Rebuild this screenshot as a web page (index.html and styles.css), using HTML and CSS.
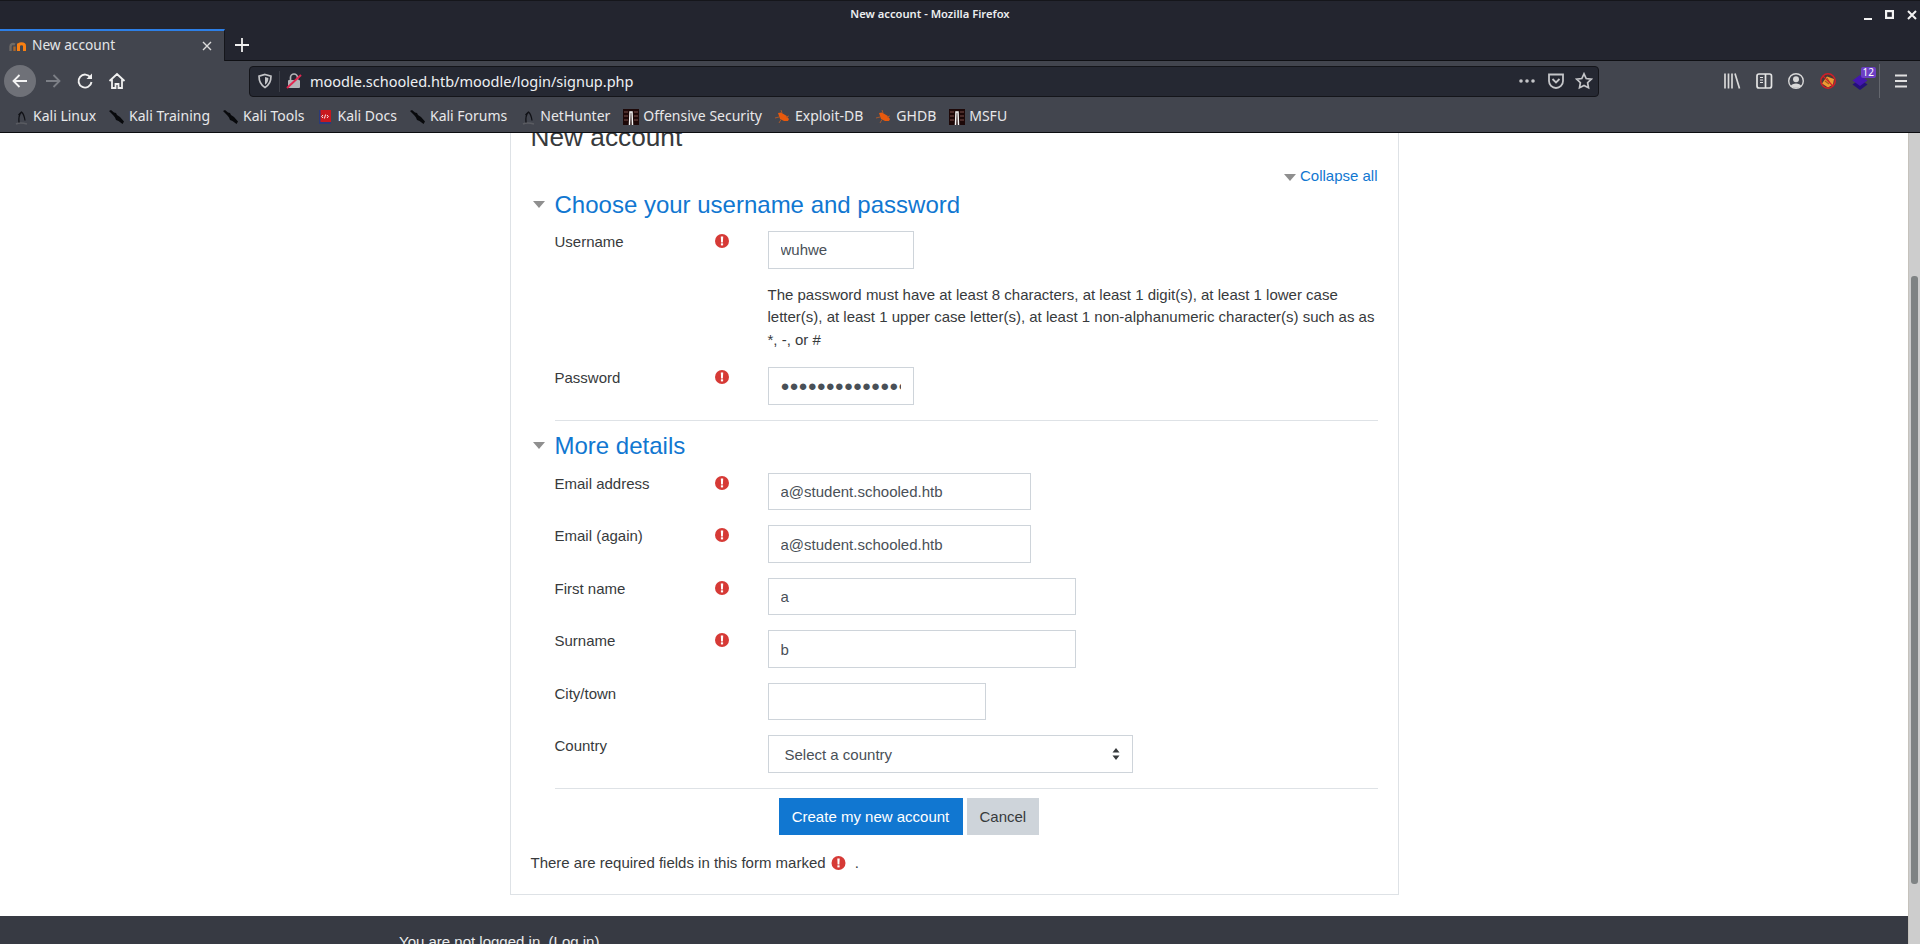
FILE: index.html
```html
<!DOCTYPE html>
<html lang="en">
<head>
  <meta charset="UTF-8" />
  <title>New account - Mozilla Firefox</title>
  <link rel="stylesheet" href="styles.css">
</head>
<body>
  <svg class="defs" width="0" height="0">
    <symbol id="i-req" viewBox="0 0 14 14">
      <circle cx="7" cy="7" r="7" fill="#d63a36"/>
      <path d="M5.800 2.600h2.400L7.900 8.400H6.100z" fill="#fff"/>
      <rect x="5.900" y="9.300" width="2.200" height="2.100" fill="#fff"/>
    </symbol>
    <symbol id="i-kali" viewBox="0 0 16 16">
      <path d="M3 15c3-1.500 6-1.500 11 0" fill="none" stroke="#5a5c62" stroke-width="1.600"/>
      <path d="M6 13.500C5.500 9 6 5.500 8.500 3c2 1.500 3 5 3.500 8.500M8.500 3L5.500 6" fill="none" stroke="#101116" stroke-width="1.300"/>
    </symbol>
    <symbol id="i-sword" viewBox="0 0 16 16">
      <path d="M0 2l2-1 3 2.500 2 .5 1 2 3 2 4 4.500-1.500 2.500-4-3-2.500-1-1-2.500L4 6 2.500 4.500z" fill="#08090c"/>
    </symbol>
    <symbol id="i-bug" viewBox="0 0 16 16">
      <path d="M3 4l3-.5 5 3 3 3.500-1 2-4 0-4-2z" fill="#e8590c"/>
      <path d="M0 9l4-1M4 14l2-3.500M6 1l1 3M14 7l-3 1" stroke="#a8582c" stroke-width="1"/>
    </symbol>
    <symbol id="i-offsec" viewBox="0 0 16 16">
      <rect width="16" height="16" fill="#1d0808"/>
      <path d="M1 3h4M1 7h4M1 11h4M11 3h4M11 7h4M11 11h4" stroke="#7a4f4a" stroke-width="1.200"/>
      <path d="M6.500 16l.5-13h2l.5 13" fill="none" stroke="#f4f4f4" stroke-width="1.500"/>
    </symbol>
  </svg>

  <header class="browser">
    <div class="titlebar">
      <div class="window-title">New account - Mozilla Firefox</div>
      <div class="window-buttons">
        <svg width="22" height="12" viewBox="0 0 22 12"><rect x="7" y="9" width="8" height="2" fill="#f2f2f2"/></svg>
        <svg width="22" height="12" viewBox="0 0 22 12"><rect x="7.100" y="2.100" width="6.800" height="6.800" fill="none" stroke="#f2f2f2" stroke-width="2.200"/></svg>
        <svg width="22" height="12" viewBox="0 0 22 12"><path d="M7 2l8 8M15 2l-8 8" stroke="#f2f2f2" stroke-width="2"/></svg>
      </div>
    </div>
    <div class="tabstrip">
      <div class="tab">
        <svg class="tab-icon" width="17" height="16" viewBox="0 0 17 16">
          <path d="M1.500 13V8.500C1.500 6 4 5.500 6 6.500" fill="none" stroke="#6e6a66" stroke-width="2.400"/>
          <path d="M5.500 13V8.500" stroke="#a8662c" stroke-width="2.400"/>
          <path d="M9.500 13V5.500M9.500 8c0-3 6-3 6 0V13" fill="none" stroke="#f98012" stroke-width="3"/>
        </svg>
        <span class="tab-label">New account</span>
        <svg class="tab-close" width="12" height="12" viewBox="0 0 12 12"><path d="M2 2l8 8M10 2l-8 8" stroke="#dcdcdc" stroke-width="1.400"/></svg>
      </div>
      <svg class="new-tab" width="16" height="16" viewBox="0 0 16 16"><path d="M8 1v14M1 8h14" stroke="#f0f0f0" stroke-width="1.800"/></svg>
    </div>
    <div class="navbar">
      <div class="nav-btn back">
        <svg width="18" height="18" viewBox="0 0 18 18"><path d="M16 9H3M8.500 3L2.500 9l6 6" fill="none" stroke="#f4f4f4" stroke-width="1.800"/></svg>
      </div>
      <div class="nav-btn">
        <svg width="18" height="18" viewBox="0 0 18 18"><path d="M2 9h13M9.500 3l6 6-6 6" fill="none" stroke="#7c7f86" stroke-width="1.800"/></svg>
      </div>
      <div class="nav-btn">
        <svg width="18" height="18" viewBox="0 0 18 18"><path d="M14.500 5.500A6.500 6.500 0 1 0 15.500 10" fill="none" stroke="#f0f0f0" stroke-width="1.900"/><path d="M16 1.500V7h-5.500z" fill="#f0f0f0"/></svg>
      </div>
      <div class="nav-btn">
        <svg width="18" height="18" viewBox="0 0 18 18"><path d="M1.500 9L9 2l7.500 7M4 7.500V16h3.500v-4h3v4H14V7.500" fill="none" stroke="#f0f0f0" stroke-width="1.800"/></svg>
      </div>
      <div class="urlbar">
        <svg class="url-shield" width="16" height="16" viewBox="0 0 16 16"><path d="M8 1.500l6 1.600c0 5.400-1.600 9-6 11.400C3.600 12.100 2 8.500 2 3.100z" fill="none" stroke="#c4c5c8" stroke-width="1.700"/><path d="M8 4l3.400.9C11.300 8 10.400 10.100 8 11.700z" fill="#c4c5c8"/></svg>
        <span class="url-divider"></span>
        <svg class="url-lock" width="16" height="16" viewBox="0 0 16 16"><rect x="2" y="7" width="12" height="8" rx="1" fill="#b4b5b8"/><path d="M4.500 7V4.500a3.500 3.500 0 0 1 7 0V7" fill="none" stroke="#b4b5b8" stroke-width="1.700"/><path d="M1 15L15 2" stroke="#e22850" stroke-width="2"/></svg>
        <span class="url-text">moodle.schooled.htb/moodle/login/signup.php</span>
        <div class="url-actions">
          <svg class="url-dots" width="18" height="18" viewBox="0 0 18 18"><circle cx="3" cy="9" r="1.800" fill="#c4c5c8"/><circle cx="9" cy="9" r="1.800" fill="#c4c5c8"/><circle cx="15" cy="9" r="1.800" fill="#c4c5c8"/></svg>
          <svg width="18" height="18" viewBox="0 0 18 18"><path d="M2 2.500h14v6.500a7 7 0 0 1-14 0z" fill="none" stroke="#c4c5c8" stroke-width="1.800"/><path d="M5.500 7L9 10.500 12.500 7" fill="none" stroke="#c4c5c8" stroke-width="1.800"/></svg>
          <svg width="18" height="18" viewBox="0 0 18 18"><path d="M9 1.800l2.200 4.700 5 .7-3.600 3.500.9 5.100L9 13.400l-4.500 2.400.9-5.100L1.800 7.200l5-.7z" fill="none" stroke="#c4c5c8" stroke-width="1.700"/></svg>
        </div>
      </div>
      <div class="toolbar-right">
        <div class="nav-btn">
          <svg width="18" height="18" viewBox="0 0 18 18"><path d="M2 1.500v15M5.500 1.500v15M9 1.500v15M12 1.500l4.500 15" stroke="#d8d8d8" stroke-width="1.700"/></svg>
        </div>
        <div class="nav-btn">
          <svg width="18" height="18" viewBox="0 0 18 18"><rect x="2" y="2" width="14.500" height="14" rx="2" fill="none" stroke="#e4e4e4" stroke-width="1.700"/><path d="M10.500 2v14" stroke="#e4e4e4" stroke-width="1.700"/><path d="M5 5.500h3M5 8h3M5 10.500h3" stroke="#e4e4e4" stroke-width="1.200"/></svg>
        </div>
        <div class="nav-btn">
          <svg width="18" height="18" viewBox="0 0 18 18"><circle cx="9" cy="9" r="7.300" fill="none" stroke="#d8d8d8" stroke-width="1.400"/><circle cx="9" cy="7.300" r="3" fill="#d8d8d8"/><path d="M3.800 14c1-3.400 9.400-3.400 10.400 0-2.500 2.400-7.900 2.400-10.400 0z" fill="#d8d8d8"/></svg>
        </div>
        <div class="nav-btn">
          <svg width="18" height="18" viewBox="0 0 18 18"><circle cx="9" cy="9" r="7.200" fill="#4a3a36"/><path d="M3 11.500l5-7 7 2.500-1 5.500-5 3z" fill="#f09a32"/><path d="M6 9l4 3M8 6l3 5" stroke="#9a5a1c" stroke-width="1.100"/><circle cx="9" cy="9" r="7.200" fill="none" stroke="#d21e28" stroke-width="1.500"/><path d="M4 4l10 10" stroke="#d21e28" stroke-width="1.100"/></svg>
        </div>
        <div class="nav-btn stack">
          <svg width="18" height="18" viewBox="0 0 18 18"><path d="M9 7l7.500 5.500L9 18l-7.500-5.500z" fill="#25107a"/><path d="M9 3l7.500 5.500L9 14 1.500 8.500z" fill="#4416b0"/></svg>
          <span class="badge">12</span>
        </div>
        <span class="toolbar-sep"></span>
        <div class="nav-btn menu">
          <svg width="16" height="16" viewBox="0 0 16 16"><path d="M2 2.500h12M2 8h12M2 13.500h12" stroke="#e0e0e0" stroke-width="1.800"/></svg>
        </div>
      </div>
    </div>
    <div class="bookmarks">
      <div class="bm"><svg width="16" height="16"><use href="#i-kali"/></svg><span>Kali Linux</span></div>
      <div class="bm"><svg width="16" height="16"><use href="#i-sword"/></svg><span>Kali Training</span></div>
      <div class="bm"><svg width="16" height="16"><use href="#i-sword"/></svg><span>Kali Tools</span></div>
      <div class="bm">
        <svg width="16" height="16" viewBox="0 0 16 16"><rect x="2" y="1" width="12" height="14" fill="#c8181e"/><rect x="2" y="13" width="12" height="2" fill="#2a3a7a"/><rect x="2" y="1" width="1.500" height="14" fill="#2a3a7a"/><path d="M6 6L4.700 7.500 6 9M10 6l1.300 1.500L10 9M8.600 5.500L7.400 9.500" fill="none" stroke="#fff" stroke-width=".9"/></svg>
        <span>Kali Docs</span>
      </div>
      <div class="bm"><svg width="16" height="16"><use href="#i-sword"/></svg><span>Kali Forums</span></div>
      <div class="bm"><svg width="16" height="16"><use href="#i-kali"/></svg><span>NetHunter</span></div>
      <div class="bm"><svg width="16" height="16"><use href="#i-offsec"/></svg><span>Offensive Security</span></div>
      <div class="bm"><svg width="16" height="16"><use href="#i-bug"/></svg><span>Exploit-DB</span></div>
      <div class="bm"><svg width="16" height="16"><use href="#i-bug"/></svg><span>GHDB</span></div>
      <div class="bm"><svg width="16" height="16"><use href="#i-offsec"/></svg><span>MSFU</span></div>
    </div>
  </header>

  <div class="viewport">
    <div class="page">
      <main class="card">
        <h2 class="page-title">New account</h2>
        <div class="collapse-line">
          <a class="collapse-link" href="#"><span class="tri tri-sm"></span>Collapse all</a>
        </div>
        <form>
          <h3 class="legend"><span class="tri"></span>Choose your username and password</h3>
          <div class="fitem">
            <label class="flabel">Username<svg class="req"><use href="#i-req"/></svg></label>
            <input class="field w-sm" type="text" value="wuhwe">
          </div>
          <p class="policy">The password must have at least 8 characters, at least 1 digit(s), at least 1 lower case letter(s), at least 1 upper case letter(s), at least 1 non-alphanumeric character(s) such as as *, -, or #</p>
          <div class="fitem">
            <label class="flabel">Password<svg class="req"><use href="#i-req"/></svg></label>
            <input class="field w-sm" type="text" value="●●●●●●●●●●●●●●●●●●">
          </div>
          <hr class="rule">
          <h3 class="legend legend-next"><span class="tri"></span>More details</h3>
          <div class="fitem">
            <label class="flabel">Email address<svg class="req"><use href="#i-req"/></svg></label>
            <input class="field w-md" type="text" value="a@student.schooled.htb">
          </div>
          <div class="fitem">
            <label class="flabel">Email (again)<svg class="req"><use href="#i-req"/></svg></label>
            <input class="field w-md" type="text" value="a@student.schooled.htb">
          </div>
          <div class="fitem">
            <label class="flabel">First name<svg class="req"><use href="#i-req"/></svg></label>
            <input class="field w-lg" type="text" value="a">
          </div>
          <div class="fitem">
            <label class="flabel">Surname<svg class="req"><use href="#i-req"/></svg></label>
            <input class="field w-lg" type="text" value="b">
          </div>
          <div class="fitem">
            <label class="flabel">City/town</label>
            <input class="field w-city" type="text" value="">
          </div>
          <div class="fitem">
            <label class="flabel">Country</label>
            <div class="select-wrap">
              <select class="field w-select">
                <option>Select a country</option>
              </select>
              <svg class="select-arrows" width="8" height="12" viewBox="0 0 8 12"><path d="M4 0l3.500 4.500h-7zM4 12L.5 7.500h7z" fill="#373a3c"/></svg>
            </div>
          </div>
          <hr class="rule rule-last">
          <div class="actions">
            <button class="btn btn-primary" type="button">Create my new account</button>
            <button class="btn btn-cancel" type="button">Cancel</button>
          </div>
        </form>
        <p class="required-note">There are required fields in this form marked<svg class="req-inline"><use href="#i-req"/></svg>.</p>
      </main>
      <footer class="site-footer">You are not logged in. (<a href="#">Log in</a>)</footer>
    </div>
    <div class="scrollbar"><div class="thumb"></div></div>
  </div>
</body>
</html>
```

FILE: styles.css
```css
* {
  box-sizing: border-box;
}

html, body {
  height: 100%;
}

body {
  margin: 0;
  display: flex;
  flex-direction: column;
  overflow: hidden;
  font-family: "Liberation Sans", Arial, sans-serif;
  font-size: 15px;
  line-height: 22.5px;
  color: #373a3c;
  background-color: #fff;
}

.defs {
  display: none;
}

/* browser chrome */
.browser {
  flex: none;
  height: 133px;
  font-family: "Noto Sans", sans-serif;
  color: #e8e8ea;
  background-color: #42454e;
  border-bottom: 1px solid #0b0c10;
}

.titlebar {
  height: 29px;
  display: flex;
  justify-content: center;
  align-items: center;
  background-color: #23252f;
  border-top: 1px solid #15161b;
  position: relative;
  padding: 0 60px 1px 0;
}

.window-title {
  font-size: 11.2px;
  font-weight: 600;
  color: #eceef0;
}

.window-buttons {
  position: absolute;
  right: -3px;
  top: 8px;
  display: flex;
}

.tabstrip {
  height: 32px;
  display: flex;
  align-items: center;
  background-color: #23252f;
  border-bottom: 1px solid #0f1014;
}

.tab {
  width: 225px;
  height: 32px;
  display: flex;
  align-items: center;
  padding: 0 11px 0 9px;
  background-color: #42454e;
  border-top: 2px solid #2d7fe6;
  border-right: 1px solid #15161b;
}

.tab-label {
  flex: 1;
  margin-left: 6px;
  font-size: 13.7px;
  color: #e4e5e8;
}

.new-tab {
  margin-left: 9px;
}

.navbar {
  height: 36px;
  display: flex;
  align-items: center;
  padding-left: 4px;
  padding-top: 4px;
}

.nav-btn {
  width: 32px;
  height: 32px;
  display: flex;
  justify-content: center;
  align-items: center;
  flex: none;
  position: relative;
}

.back {
  margin-right: 1px;
  background-color: #6f7178;
  border-radius: 50%;
}

.urlbar {
  width: 1350px;
  height: 31px;
  margin-left: 116px;
  display: flex;
  align-items: center;
  padding: 0 5px 0 7px;
  background-color: #252832;
  border: 1px solid #14151a;
  border-radius: 4px;
}

.url-divider {
  width: 1px;
  height: 21px;
  margin: 0 6px;
  background-color: #3c3f48;
}

.url-text {
  margin-left: 8px;
  font-size: 14.5px;
  color: #eef0f2;
}

.url-actions {
  margin-left: auto;
  display: flex;
  gap: 10px;
}

.url-dots {
  margin-right: 1px;
}

.toolbar-right {
  margin-left: 117px;
  display: flex;
  align-items: center;
}

.toolbar-sep {
  width: 1px;
  height: 34px;
  margin: 0 5px 0 3px;
  background-color: #64676e;
}

.badge {
  position: absolute;
  top: 2px;
  right: 0;
  padding: 0 2px;
  font-size: 10px;
  line-height: 11px;
  color: #fff;
  background-color: #6b3fc4;
  border-radius: 2px;
}

.bookmarks {
  height: 36px;
  display: flex;
  align-items: center;
  gap: 13px;
  padding: 3px 0 0 13px;
}

.bm {
  display: flex;
  align-items: center;
  flex: none;
  gap: 4px;
  font-size: 14px;
  white-space: nowrap;
  color: #e8e8ea;
}

/* page */
.viewport {
  flex: 1;
  min-height: 0;
  display: flex;
}

.page {
  flex: 1;
  min-width: 0;
  overflow: hidden;
}

.card {
  width: 889px;
  margin: -13px auto 0;
  padding: 0 20px 20px;
  border: 1px solid #dee2e6;
  border-top: none;
}

.page-title {
  margin: 0;
  font-size: 26.25px;
  font-weight: 400;
  line-height: 34px;
}

a {
  color: #1177d1;
  text-decoration: none;
}

.collapse-line {
  margin-top: 11px;
  text-align: right;
}

.tri {
  display: inline-block;
  width: 0;
  height: 0;
  margin: 0 10px 4px 2px;
  vertical-align: middle;
  border-left: 6px solid transparent;
  border-right: 6px solid transparent;
  border-top: 7px solid #8f8f8f;
}

.tri-sm {
  margin: 0 4px 0 0;
}

.legend {
  margin: 2px 0 0;
  padding-bottom: 11.5px;
  font-size: 24px;
  font-weight: 400;
  line-height: 30px;
  color: #1177d1;
}

.legend-next {
  margin-top: 10.75px;
}

.fitem {
  display: flex;
  margin: 0 0 15px 24px;
}

.flabel {
  width: 213px;
  flex: none;
  position: relative;
}

.req {
  position: absolute;
  left: 160px;
  top: 3px;
  width: 14px;
  height: 14px;
}

.field {
  height: 37.5px;
  padding: 0 12px;
  font-family: inherit;
  font-size: 15px;
  color: #495057;
  background-color: #fff;
  border: 1px solid #ced4da;
  border-radius: 0;
}

.w-sm { width: 146px; }
.w-md { width: 263px; }
.w-lg { width: 308px; }
.w-city { width: 218px; }

.w-select {
  width: 365px;
  padding: 0 16px;
  appearance: none;
  -webkit-appearance: none;
}

.select-wrap {
  position: relative;
}

.select-arrows {
  position: absolute;
  right: 13px;
  top: 13px;
}

.policy {
  margin: 0 0 16px 237px;
}

.rule {
  margin: 0 0 0 24px;
  border: 0;
  border-top: 1px solid #dee2e6;
}

.rule-last {
  margin-bottom: 9px;
}

.actions {
  display: flex;
  gap: 4px;
  margin-left: 248px;
}

.btn {
  height: 37px;
  padding: 0 13px;
  font-family: inherit;
  font-size: 15px;
  border: 0;
}

.btn-primary {
  width: 184px;
  color: #fff;
  background-color: #1177d1;
}

.btn-cancel {
  width: 72px;
  color: #373a3c;
  background-color: #ced4da;
}

.required-note {
  margin: 17px 0 0;
  height: 22.5px;
}

.req-inline {
  width: 15px;
  height: 14px;
  margin: 0 9px -2px 5px;
}

.site-footer {
  margin-top: 20.75px;
  height: 60px;
  padding: 15px 0 0 399px;
  color: #eceeef;
  background-color: #373a43;
}

.site-footer a {
  color: #eceeef;
}

.scrollbar {
  flex: none;
  width: 12px;
  padding: 143px 2px 0;
  background-color: #cdcdcd;
  border-left: 1px solid #c5c2bc;
}

.thumb {
  height: 608px;
  background-color: #7f8384;
  border-radius: 3px;
}
```
